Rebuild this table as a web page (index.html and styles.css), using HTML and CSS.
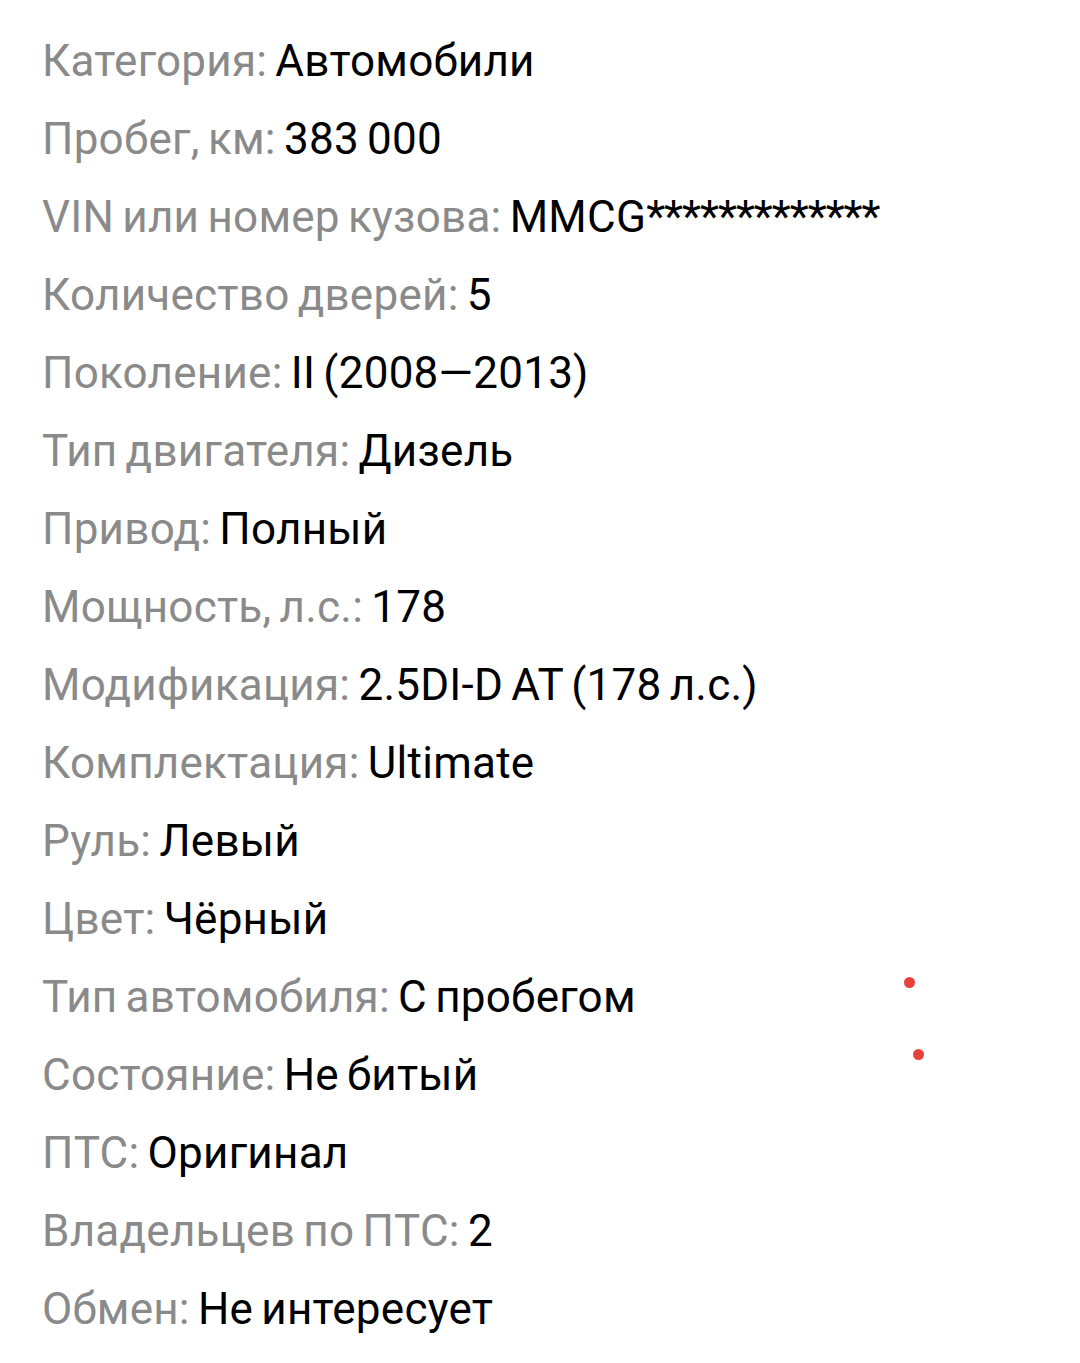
FILE: index.html
```html
<!DOCTYPE html>
<html lang="ru">
<head>
<meta charset="utf-8">
<link rel="stylesheet" href="styles.css">
</head>
<body>
<div class="list">
  <div class="row"><span class="k">Категория:</span> <span class="v">Автомобили</span></div>
  <div class="row"><span class="k">Пробег, км:</span> <span class="v">383 000</span></div>
  <div class="row"><span class="k">VIN или номер кузова:</span> <span class="v">MMCG<span class="mask">*************</span></span></div>
  <div class="row"><span class="k">Количество дверей:</span> <span class="v">5</span></div>
  <div class="row"><span class="k">Поколение:</span> <span class="v">II (2008—2013)</span></div>
  <div class="row"><span class="k">Тип двигателя:</span> <span class="v">Дизель</span></div>
  <div class="row"><span class="k">Привод:</span> <span class="v">Полный</span></div>
  <div class="row"><span class="k">Мощность, л.с.:</span> <span class="v">178</span></div>
  <div class="row"><span class="k">Модификация:</span> <span class="v">2.5DI-D AT (178 л.с.)</span></div>
  <div class="row"><span class="k">Комплектация:</span> <span class="v">Ultimate</span></div>
  <div class="row"><span class="k">Руль:</span> <span class="v">Левый</span></div>
  <div class="row"><span class="k">Цвет:</span> <span class="v">Чёрный</span></div>
  <div class="row"><span class="k">Тип автомобиля:</span> <span class="v">С пробегом</span></div>
  <div class="row"><span class="k">Состояние:</span> <span class="v">Не битый</span></div>
  <div class="row"><span class="k">ПТС:</span> <span class="v">Оригинал</span></div>
  <div class="row"><span class="k">Владельцев по ПТС:</span> <span class="v">2</span></div>
  <div class="row"><span class="k">Обмен:</span> <span class="v">Не интересует</span></div>
</div>
<span class="dot dot1"></span>
<span class="dot dot2"></span>
</body>
</html>
```
FILE: styles.css
```css
html, body {
  margin: 0;
  padding: 0;
  background: #fff;
}
body {
  font-family: Roboto, "Noto Sans", sans-serif;
  position: relative;
  width: 1080px;
  height: 1363px;
  overflow: hidden;
}
.list {
  padding: 22px 0 0 42px;
  display: flex;
  flex-direction: column;
}
.row {
  font-size: 44px;
  line-height: 78px;
  white-space: nowrap;
  letter-spacing: 0.25px;
  word-spacing: -3px;
}
.k {
  color: #8a8a8a;
}
.v {
  color: #000;
}
.mask {
  letter-spacing: -1px;
}
.dot {
  position: absolute;
  width: 11px;
  height: 11px;
  border-radius: 50%;
  background: #e8403a;
}
.dot1 { left: 904px; top: 977px; }
.dot2 { left: 913px; top: 1049px; }
```
